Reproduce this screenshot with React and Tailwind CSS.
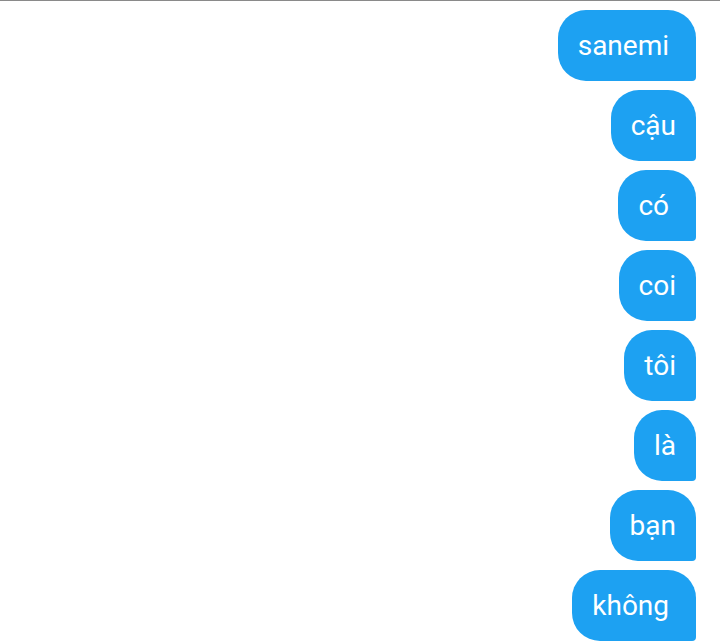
export default function App() {
  const words = ["sanemi ", "cậu", "có ", "coi", "tôi", "là", "bạn", "không "];
  return (
    <div className="w-[720px] h-[643px] bg-white overflow-hidden border-t border-[#8a8a8a]" style={{ fontFamily: "Roboto, 'Noto Sans', sans-serif" }}>
      <div className="flex flex-col items-end gap-[9px] pt-[9px] pr-[24px]">
        {words.map((w, i) => (
          <div
            key={i}
            className="bg-[#1da1f2] text-white text-[28px] leading-[33px] py-[19px] px-[20px] whitespace-pre rounded-tl-[28px] rounded-tr-[28px] rounded-bl-[28px] rounded-br-[4px]"
          >
            {w}
          </div>
        ))}
      </div>
    </div>
  );
}
